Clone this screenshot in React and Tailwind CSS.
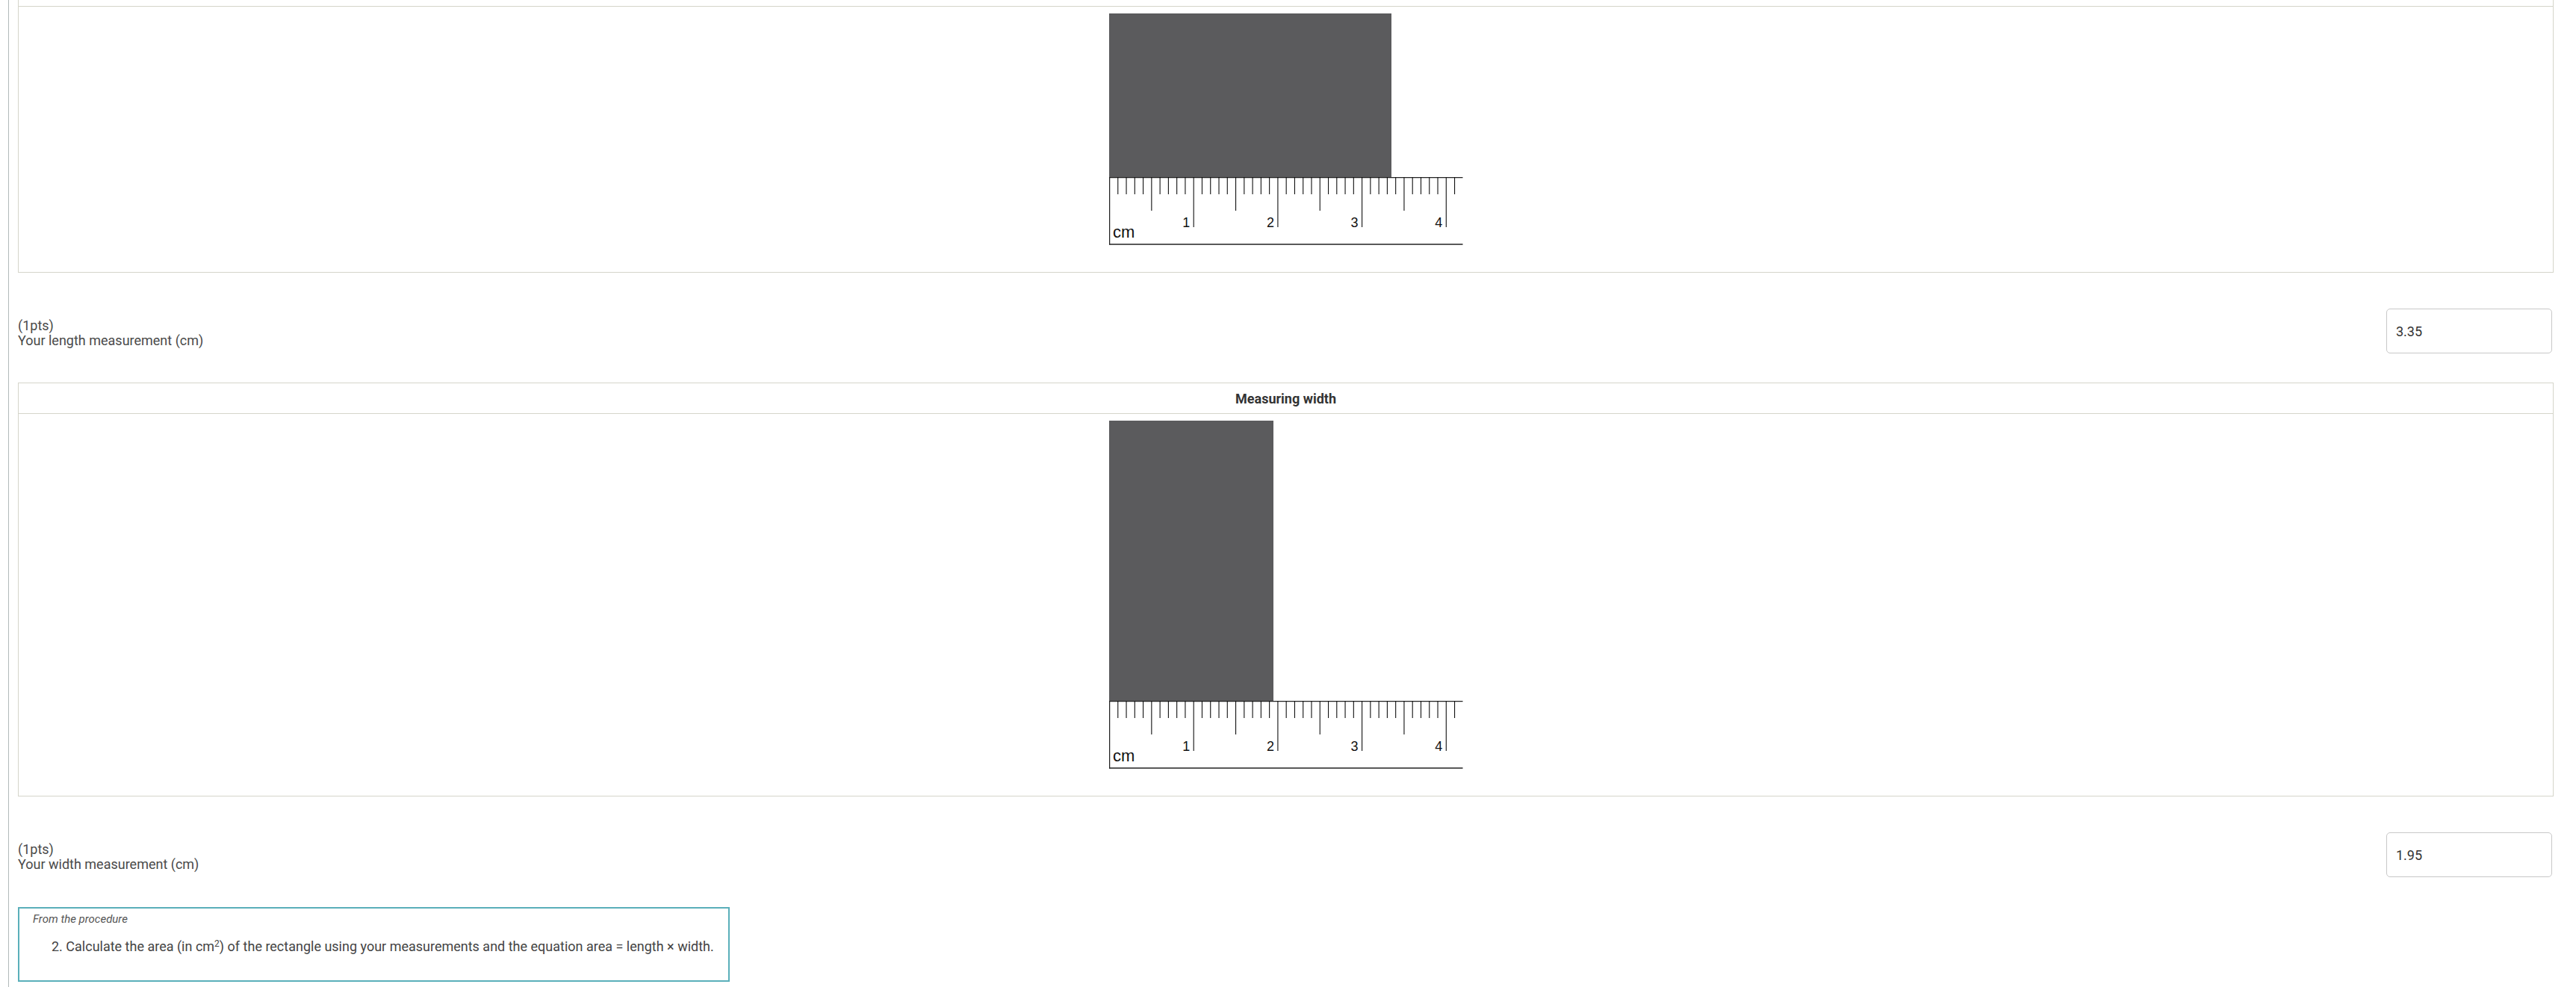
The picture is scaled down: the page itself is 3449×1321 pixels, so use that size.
import React from "react";

const CM = 112.7;

function Ruler() {
  const ticks = [];
  for (let i = 1; i <= 41; i++) {
    const x = 0.5 + (i * CM) / 10;
    const len = i % 10 === 0 ? 67 : i % 5 === 0 ? 45 : 23;
    ticks.push(
      <line key={i} x1={x} y1={0} x2={x} y2={len} stroke="#111" strokeWidth="1.1" />
    );
  }
  const labels = [1, 2, 3, 4].map((n) => (
    <text
      key={n}
      x={0.5 + n * CM - 5}
      y={67}
      textAnchor="end"
      fontSize="18"
      fill="#111"
      fontFamily="'Liberation Sans', Arial, sans-serif"
    >
      {n}
    </text>
  ));
  return (
    <svg width="474" height="92" viewBox="0 0 474 92" className="block">
      <line x1="0" y1="0.6" x2="473.5" y2="0.6" stroke="#222" strokeWidth="1.3" />
      <line x1="0.6" y1="0" x2="0.6" y2="90.5" stroke="#222" strokeWidth="1.3" />
      <line x1="0" y1="90" x2="473.5" y2="90" stroke="#222" strokeWidth="1.4" />
      {ticks}
      {labels}
      <text
        x="5"
        y="81"
        fontSize="22"
        fill="#111"
        fontFamily="'Liberation Sans', Arial, sans-serif"
      >
        cm
      </text>
    </svg>
  );
}

function Figure({ value, height }) {
  return (
    <div className="flex flex-col w-[474px]">
      <div className="bg-[#5b5b5d]" style={{ width: value * CM + 0.5, height }} />
      <Ruler />
    </div>
  );
}

function Card({ title, value, height }) {
  return (
    <div className="border border-[#d5d5ca] bg-white">
      <div className="h-[41px] border-b border-[#d5d5ca] flex items-center justify-center text-[18px] font-bold text-[#333]">
        {title}
      </div>
      <div className="flex justify-center pt-[9px] pb-[35px]">
        <Figure value={value} height={height} />
      </div>
    </div>
  );
}

function Row({ label, value }) {
  return (
    <div className="flex items-center justify-between pr-[2px]">
      <div className="text-[18px] leading-[20px] text-[#4a4a4a] mt-[6px]">
        <div>(1pts)</div>
        <div>{label}</div>
      </div>
      <div className="w-[222px] h-[60px] border border-[#c8c8c8] rounded-[5px] flex items-center pl-[12px] text-[18px] text-[#333]">
        {value}
      </div>
    </div>
  );
}

export default function App() {
  return (
    <div
      className="bg-white min-h-screen pl-[11px] overflow-hidden"
      style={{ fontFamily: "Roboto, 'Liberation Sans', Arial, sans-serif" }}
    >
      <div className="border-l border-[#b2baba] pl-[12px] pr-[30px] -mt-[33px] pb-[40px]">
        <Card title="" value={3.35} height={219} />
        <div className="mt-[48px]">
          <Row label="Your length measurement (cm)" value="3.35" />
        </div>
        <div className="mt-[39px]">
          <Card title="Measuring width" value={1.95} height={375} />
        </div>
        <div className="mt-[48px]">
          <Row label="Your width measurement (cm)" value="1.95" />
        </div>
        <div className="mt-[40px] w-[953px] h-[100px] border-2 border-[#5aafba] pl-[18px] pt-[5px]">
          <div className="italic text-[15px] leading-[18px] text-[#555]">From the procedure</div>
          <div className="pl-[25px] mt-[17px] text-[18px] leading-[22px] text-[#444]">
            2. Calculate the area (in cm<sup className="text-[12px]">2</sup>) of the rectangle using your
            measurements and the equation area = length × width.
          </div>
        </div>
      </div>
    </div>
  );
}
